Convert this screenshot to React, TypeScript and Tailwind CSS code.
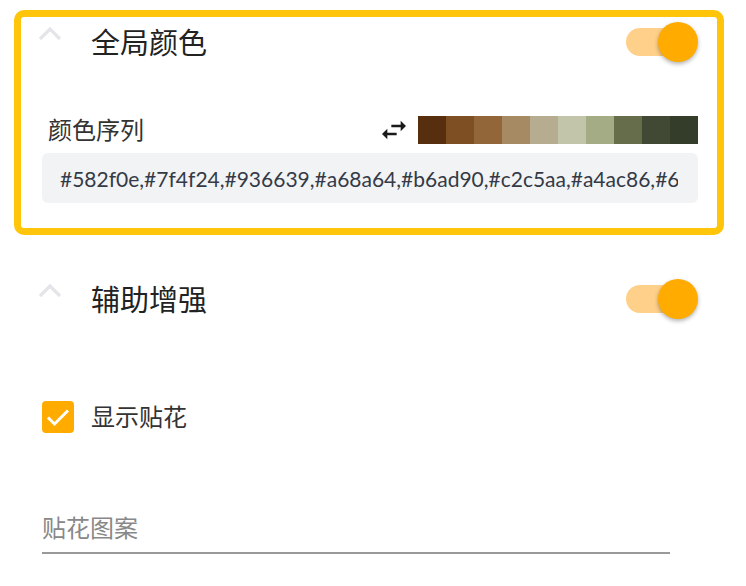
const palette = ['#582f0e', '#7f4f24', '#936639', '#a68a64', '#b6ad90', '#c2c5aa', '#a4ac86', '#656d4a', '#414833', '#333d29'];

function Chevron() {
  return (
    <svg width="24" height="16" viewBox="0 0 24 16" className="shrink-0">
      <polyline points="2,13 12,3 22,13" fill="none" stroke="#e3e5e8" strokeWidth="3.2" />
    </svg>
  );
}

function Toggle() {
  return (
    <div className="relative w-[72px] h-[40px] shrink-0">
      <div className="absolute left-0 top-[6px] w-[64px] h-[28px] rounded-full bg-[#ffd089]" />
      <div className="absolute right-0 top-0 w-[40px] h-[40px] rounded-full bg-[#ffab00] shadow-[0_2px_4px_rgba(0,0,0,0.3)]" />
    </div>
  );
}

function SectionHeader({ title }: { title: string }) {
  return (
    <div className="flex items-center h-[40px]">
      <div className="w-[70px] self-start pt-[4px] pl-[17px]">
        <Chevron />
      </div>
      <h2 className="flex-1 text-[29px] leading-none text-[#222]">{title}</h2>
      <Toggle />
    </div>
  );
}

export default function App() {
  return (
    <div className="w-[746px] h-[586px] overflow-hidden bg-white font-['Lato','Noto_Sans_CJK_SC',sans-serif]">
      <section className="ml-[14px] mt-[10px] w-[710px] border-[7px] border-[#ffc50a] rounded-[10px] pr-[19px] pt-[5px] pb-[25px]">
        <SectionHeader title="全局颜色" />
        <div className="pl-[21px] mt-[54px]">
          <div className="flex items-center h-[28px]">
            <span className="flex-1 pl-[6px] text-[24px] leading-none text-[#333]">颜色序列</span>
            <svg width="32" height="32" viewBox="0 0 24 24" className="mr-[8px]">
              <path d="M6.99 11L3 15l3.99 4v-3H14v-2H6.99v-3zM21 9l-3.99-4v3H10v2h7.01v3L21 9z" fill="#1a1a1a" />
            </svg>
            <div className="flex">
              {palette.map((c) => (
                <div key={c} className="w-[28px] h-[28px]" style={{ backgroundColor: c }} />
              ))}
            </div>
          </div>
          <input
            readOnly
            value="#582f0e,#7f4f24,#936639,#a68a64,#b6ad90,#c2c5aa,#a4ac86,#656d4a,#414833,#333d29"
            className="mt-[9px] block w-full h-[50px] rounded-[6px] bg-[#f2f3f5] pl-[18px] pr-[20px] text-[21px] text-[#343a46] outline-none"
          />
        </div>
      </section>

      <section className="ml-[14px] mt-[32px] w-[710px] border-[7px] border-transparent pr-[19px] pt-[5px]">
        <SectionHeader title="辅助增强" />
        <div className="pl-[21px]">
          <label className="mt-[82px] flex items-center">
            <span className="w-[32px] h-[32px] rounded-[4px] bg-[#ffab00] flex items-center justify-center">
              <svg width="32" height="32" viewBox="0 0 32 32">
                <polyline points="6,16.5 12.5,23 26,9.5" fill="none" stroke="#fff" strokeWidth="3" />
              </svg>
            </span>
            <span className="ml-[17px] text-[24px] leading-none text-[#333]">显示贴花</span>
          </label>
          <div className="mt-[80px] w-[628px] border-b-2 border-[#999] pb-[9px]">
            <span className="block text-[24px] leading-[30px] text-[#888]">贴花图案</span>
          </div>
        </div>
      </section>
    </div>
  );
}
